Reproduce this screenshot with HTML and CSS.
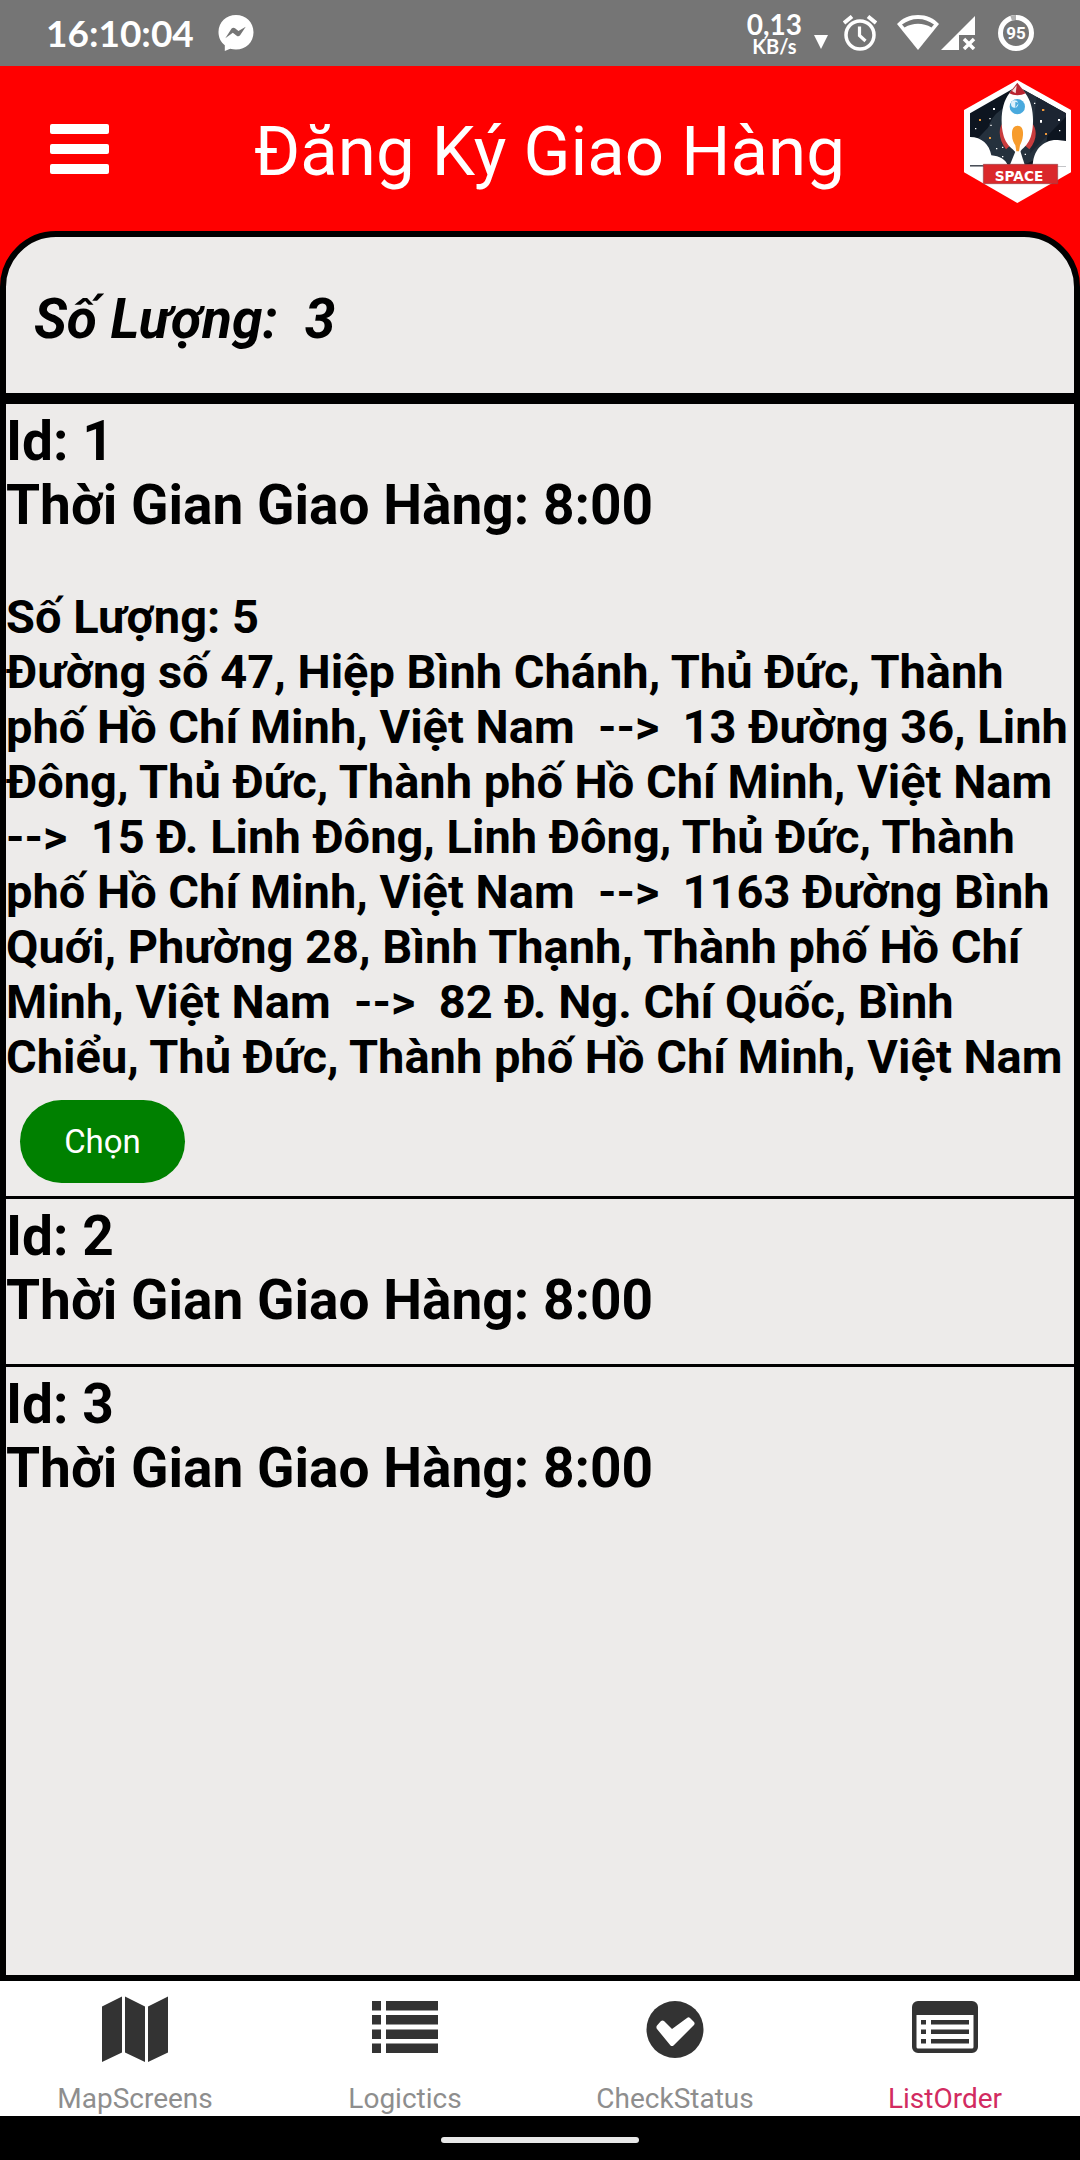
FILE: index.html
```html
<!DOCTYPE html>
<html lang="vi">
<head>
<meta charset="utf-8">
<meta name="viewport" content="width=device-width, initial-scale=1">
<title>Đăng Ký Giao Hàng</title>
<link rel="stylesheet" href="styles.css">
</head>
<body>
<div class="status-bar">
  <time class="clock">16:10:04</time>
  <svg class="messenger" viewBox="0 0 36 37" aria-hidden="true">
    <path fill="#fff" d="M18 0C8 0 0 7.500 0 17.500c0 6 2.500 10.500 6.500 13.700V37l5.500-2.300c2 .6 4 .8 6 .8 10 0 18-7.500 18-17.800S28 0 18 0z"/>
    <path fill="#757575" d="M7 24l6.500-10c1-1.200 2.300-1.300 3.500-.4l3.500 2.800 7.500-4.400-5.800 8.700c-1 1.300-2.300 1.500-3.500.6l-4-3z"/>
  </svg>
  <div class="status-right">
    <div class="speed"><span class="rate">0,13</span><span class="unit">KB/s</span></div>
    <svg class="arrow" viewBox="0 0 14 14" aria-hidden="true"><path fill="#fff" d="M0 0h14L7 14z"/></svg>
    <svg class="alarm" viewBox="0 0 34 36" aria-hidden="true">
      <g fill="none" stroke="#fff"><circle cx="17" cy="20" r="14" stroke-width="3.500"/><path stroke-width="3.200" d="M16.500 11.500v9l6 5.500"/><path stroke-width="4" d="M1 8l8-6.500M33 8l-8-6.500"/></g>
    </svg>
    <svg class="wifi" viewBox="0 0 42 36" aria-hidden="true">
      <path fill="#fff" d="M21 0C12.500 0 5.500 3 0 9l21 26L42 9C36.500 3 29.500 0 21 0z"/>
      <path d="M5 9.500C14.500 2 27.500 2 37 9.500L34.500 12.500C26 7.500 16 7.500 7.500 12.500z" fill="#757575"/>
    </svg>
    <svg class="signal" viewBox="0 0 35 34" aria-hidden="true">
      <path fill="#fff" d="M34 0v19H18v15H0z"/><path fill="none" stroke="#fff" stroke-width="3.500" d="M23 23l10 10M33 23L23 33"/>
    </svg>
    <svg class="battery" viewBox="0 0 36 36" aria-hidden="true">
      <circle cx="18" cy="18" r="15.500" fill="none" stroke="#fff" stroke-width="5"/>
      <path d="M18 2.500A15.500 15.500 0 0 0 13.200 3.300" fill="none" stroke="#b0b0b0" stroke-width="5"/>
      <text x="18" y="24" class="battery-text">95</text>
    </svg>
  </div>
</div>

<header class="app-header">
  <button class="menu" type="button" aria-label="Menu"><span></span><span></span><span></span></button>
  <h1 class="title">Đăng Ký Giao Hàng</h1>
  <svg class="logo" viewBox="72 60 321 369" role="img" aria-label="Space">
    <defs><clipPath id="sky"><path d="M90 160L232 79l146 81v160H90z"/></clipPath></defs>
    <path fill="#fff" d="M232 60l161 90v187l-161 92-160-92V150z"/>
    <g clip-path="url(#sky)">
      <path fill="#0d1520" d="M90 70h290v250H90z"/>
      <path fill="#25303d" d="M90 260L270 70h90L190 320h-60z"/>
      <circle cx="232" cy="225" r="90" fill="#25313d"/>
      <path fill="#1c2532" d="M290 110l88 40v20L270 280z"/>
      <path fill="#fff" d="M90 231c35 0 58 22 64 55 25 2 42 12 50 30H90z"/>
      <path fill="#fff" d="M278 320c0-50 32-82 75-80l25 3v77z"/>
      <g fill="#fff"><path d="M159 144h6v6h-6zM148 174h4v4h-4zM151 194h4v4h-4zM105 204h4v4h-4zM186 260h4v4h-4zM168 264h4v4h-4zM282 128h4v4h-4zM300 180h6v8h-6zM354 177h6v6h-6zM357 210h4v4h-4zM254 281h4v4h-4zM186 288h4v4h-4z"/></g>
      <g fill="#f0983a"><path d="M117 177h6v6h-6zM147 231h6v6h-6zM306 147h7v6h-7zM315 219h6v6h-6z"/></g>
    </g>
    <path fill="#c93c3d" d="M188 190c-14 16-12 50 10 78l14-12zM276 190c16 16 16 50-8 78l-14-12z"/>
    <path fill="#fff" d="M208 100L232 68l24 32c24 30 28 85 18 124-4 18-16 34-28 44l-8 10h-10l-10-10c-12-10-24-26-28-44-10-39-6-94 18-124z"/>
    <path fill="#fff" d="M228 270h12l14 44h-44z"/>
    <path fill="#b92430" d="M232 68l25 32c-14 8-36 8-49 0z"/><path fill="#f5dddd" d="M230 76l-3 24-11-7z"/>
    <circle cx="232" cy="140" r="23" fill="#49a9dd"/><circle cx="224" cy="132" r="11" fill="#dff1fb"/><path fill="#49a9dd" d="M226 126l10 2-10 16z"/>
    <path fill="#f79c2c" d="M233 197c12 0 17 10 16 28-1 15-6 24-9 31l-3 18h-8l-3-18c-4-7-10-16-10-31-1-18 5-28 17-28z"/>
    <path fill="#da282b" stroke="#9b4349" stroke-width="2" d="M130 313h223v58H130z"/>
    <text class="logo-text" x="237" y="362">SPACE</text>
  </svg>
</header>

<main class="stage">
  <section class="panel">
    <p class="summary">Số Lượng:&nbsp; 3</p>
    <ul class="orders">
      <li class="order">
        <h2 class="order-title">Id: 1<br>Thời Gian Giao Hàng: 8:00</h2>
        <div class="detail">
          <p>Số Lượng: 5</p>
          <p class="route">Đường số 47, Hiệp Bình Chánh, Thủ Đức, Thành phố Hồ Chí Minh, Việt Nam  --&gt;  13 Đường 36, Linh Đông, Thủ Đức, Thành phố Hồ Chí Minh, Việt Nam  --&gt;  15 Đ. Linh Đông, Linh Đông, Thủ Đức, Thành phố Hồ Chí Minh, Việt Nam  --&gt;  1163 Đường Bình Quới, Phường 28, Bình Thạnh, Thành phố Hồ Chí Minh, Việt Nam  --&gt;  82 Đ. Ng. Chí Quốc, Bình Chiểu, Thủ Đức, Thành phố Hồ Chí Minh, Việt Nam</p>
        </div>
        <button class="choose" type="button">Chọn</button>
      </li>
      <li class="order"><h2 class="order-title">Id: 2<br>Thời Gian Giao Hàng: 8:00</h2></li>
      <li class="order"><h2 class="order-title">Id: 3<br>Thời Gian Giao Hàng: 8:00</h2></li>
    </ul>
  </section>
</main>

<nav class="tabs">
  <a class="tab" href="#map">
    <svg viewBox="0 0 66 66" aria-hidden="true"><path d="M0 10.500L20 .5v56L0 66zM23 .5l20 10V66l-20-9.500zM46 10.500l20-10v56L46 66z"/></svg>
    <span>MapScreens</span>
  </a>
  <a class="tab" href="#logistics">
    <svg viewBox="0 0 66 66" aria-hidden="true"><path d="M0 5h9v9.500H0zM14 5h52v9.500H14zM0 19h9v9.500H0zM14 19h52v9.500H14zM0 33.500h9V43H0zM14 33.500h52V43H14zM0 47.500h9V57H0zM14 47.500h52V57H14z"/></svg>
    <span>Logictics</span>
  </a>
  <a class="tab" href="#status">
    <svg viewBox="0 0 66 66" aria-hidden="true"><circle cx="33" cy="33.500" r="28.500"/><path fill="#fff" d="M15 29.500l4-4.500q1.500-1 3 0l8 8L45 22q1.500-1.500 3 0l4 4q1.200 1.500 0 3L31.500 49.500q-1.500 1-3 0L15 33q-1.200-2 0-3.500z"/></svg>
    <span>CheckStatus</span>
  </a>
  <a class="tab active" href="#orders" aria-current="page">
    <svg viewBox="0 0 66 66" aria-hidden="true"><path fill-rule="evenodd" d="M6 5h54a6 6 0 0 1 6 6v40a6 6 0 0 1-6 6H6a6 6 0 0 1-6-6V11a6 6 0 0 1 6-6zM4.500 19v32a1.500 1.500 0 0 0 1.500 1.500h54a1.500 1.500 0 0 0 1.500-1.500V19z"/><path d="M9 24h5v4.500H9zM19 24h38v4.500H19zM9 33.500h5V38H9zM19 33.500h38V38H19zM9 43h5v4.500H9zM19 43h38v4.500H19z"/></svg>
    <span>ListOrder</span>
  </a>
</nav>
<div class="gesture-bar"><span class="pill"></span></div>
</body>
</html>
```
FILE: styles.css
```css
* { box-sizing: border-box; }

body {
  margin: 0;
  min-height: 100vh;
  display: flex;
  flex-direction: column;
  font-family: Roboto, "Noto Sans", sans-serif;
  color: #000;
  background: #fff;
}

h1, h2, p, ul { margin: 0; padding: 0; }

/* Device status bar */
.status-bar {
  height: 66px;
  padding: 0 46px;
  display: flex;
  align-items: center;
  background: #757575;
  color: #fff;
}
.clock { font: 700 37px/44px Lato, sans-serif; }
.messenger { width: 36px; height: 36px; margin-left: 24px; }
.status-right { margin-left: auto; display: flex; align-items: center; }
.speed {
  padding-top: 4px;
  display: flex;
  flex-direction: column;
  align-items: center;
  font-family: Lato, sans-serif;
  font-weight: 700;
}
.rate { font-size: 28px; line-height: 22px; }
.unit { font-size: 20px; line-height: 22px; }
.arrow { width: 14px; height: 14px; margin: 18px 15px 0 12px; }
.alarm { width: 34px; height: 36px; margin-right: 20px; }
.wifi { width: 42px; height: 36px; margin-right: 2px; }
.signal { width: 35px; height: 34px; margin-right: 22px; }
.battery { width: 36px; height: 36px; }
.battery-text { font: 700 17px Roboto, sans-serif; fill: #fff; text-anchor: middle; }

/* App header */
.app-header {
  height: 165px;
  padding: 0 9px 0 50px;
  display: flex;
  background: #f00;
}
.menu {
  width: 59px;
  padding: 0;
  border: 0;
  background: none;
  display: flex;
  flex-direction: column;
  justify-content: center;
  gap: 10px;
}
.menu span { height: 10px; border-radius: 2px; background: #fff; }
.title {
  flex: 1;
  padding: 44px 0 0 26px;
  font-size: 69px;
  line-height: 84px;
  font-weight: 400;
  text-align: center;
  color: #fff;
}
.logo { width: 107px; height: 123px; margin-top: 14px; }
.logo-text { font: 700 41px "DejaVu Sans", sans-serif; fill: #fff; text-anchor: middle; }

/* Orders */
.stage { flex: 1; display: flex; background: #f00; }
.panel {
  flex: 1;
  border: 6px solid #000;
  border-radius: 56px 56px 0 0;
  background: #edebea;
}
.summary {
  padding: 50px 28px 42px;
  border-bottom: 11px solid #000;
  font-size: 55px;
  line-height: 64px;
  font-weight: 700;
  font-style: italic;
}
.orders { list-style: none; }
.order + .order { border-top: 3px solid #000; }
.order-title {
  padding: 5px 0 32px;
  font-size: 55px;
  line-height: 64px;
  font-weight: 700;
}
.detail {
  padding-top: 20px;
  font-size: 47px;
  line-height: 55px;
  font-weight: 700;
}
.route { white-space: pre-wrap; }
.choose {
  display: block;
  margin: 16px 14px 13px;
  width: 165px;
  height: 83px;
  border: 0;
  border-radius: 42px;
  background: #008000;
  color: #fff;
  font: 400 33px/40px Roboto, sans-serif;
}

/* Bottom tabs */
.tabs { height: 135px; display: flex; background: #fff; }
.tab {
  flex: 1;
  padding-top: 15px;
  display: flex;
  flex-direction: column;
  align-items: center;
  gap: 20px;
  font-size: 28px;
  line-height: 33px;
  color: #8e8e8e;
  text-decoration: none;
}
.tab svg { width: 66px; height: 66px; fill: #333; }
.tab.active { color: #d22b61; }

.gesture-bar {
  height: 44px;
  display: flex;
  justify-content: center;
  align-items: center;
  padding-top: 4px;
  background: #000;
}
.pill { width: 198px; height: 6px; border-radius: 3px; background: #e8e8e8; }
```
